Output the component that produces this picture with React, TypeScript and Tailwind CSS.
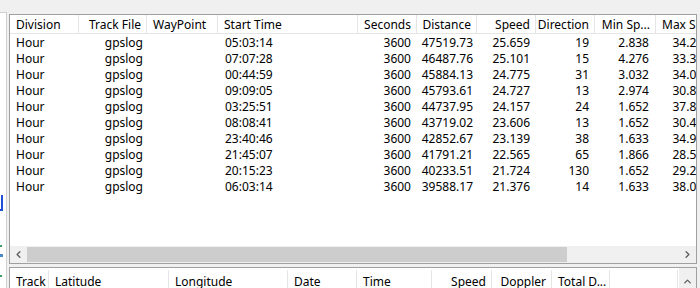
import { ChevronLeft, ChevronRight, ChevronUp } from 'lucide-react';

type Col = { label: string; w: number; align: 'left' | 'right' };

const topCols: Col[] = [
  { label: 'Division', w: 69, align: 'left' },
  { label: 'Track File', w: 68, align: 'right' },
  { label: 'WayPoint', w: 71, align: 'left' },
  { label: 'Start Time', w: 140, align: 'left' },
  { label: 'Seconds', w: 59, align: 'right' },
  { label: 'Distance', w: 60, align: 'right' },
  { label: 'Speed', w: 59, align: 'right' },
  { label: 'Direction', w: 59, align: 'right' },
  { label: 'Min Sp...', w: 61, align: 'right' },
  { label: 'Max Speed', w: 64, align: 'left' },
];

const rows = [
  ['05:03:14', '47519.73', '25.659', '19', '2.838', '34.215'],
  ['07:07:28', '46487.76', '25.101', '15', '4.276', '33.308'],
  ['00:44:59', '45884.13', '24.775', '31', '3.032', '34.017'],
  ['09:09:05', '45793.61', '24.727', '13', '2.974', '30.824'],
  ['03:25:51', '44737.95', '24.157', '24', '1.652', '37.812'],
  ['08:08:41', '43719.02', '23.606', '13', '1.652', '30.441'],
  ['23:40:46', '42852.67', '23.139', '38', '1.633', '34.903'],
  ['21:45:07', '41791.21', '22.565', '65', '1.866', '28.517'],
  ['20:15:23', '40233.51', '21.724', '130', '1.652', '29.236'],
  ['06:03:14', '39588.17', '21.376', '14', '1.633', '38.040'],
];

const bottomCols: Col[] = [
  { label: 'Track', w: 39, align: 'left' },
  { label: 'Latitude', w: 120, align: 'left' },
  { label: 'Longitude', w: 119, align: 'left' },
  { label: 'Date', w: 69, align: 'left' },
  { label: 'Time', w: 75, align: 'left' },
  { label: 'Speed', w: 60, align: 'right' },
  { label: 'Doppler', w: 60, align: 'right' },
  { label: 'Total D...', w: 58, align: 'left' },
  { label: '', w: 68, align: 'left' },
];

const HeaderCell = ({ col }: { col: Col }) => (
  <div
    className={`shrink-0 h-full border-r border-[#e5e5e5] flex items-center pt-[2px] whitespace-nowrap overflow-hidden ${
      col.align === 'right' ? 'justify-end pr-[5px]' : 'pl-[6px]'
    }`}
    style={{ width: col.w }}
  >
    {col.label}
  </div>
);

const App = () => {
  return (
    <div className="w-[700px] h-[288px] bg-[#f0f0f0] flex overflow-hidden text-[12px] text-black font-['Noto_Sans','Liberation_Sans',sans-serif]">
      {/* cut-off panel on the left */}
      <div className="w-[7px] mt-[12px] bg-white border-t border-r border-[#cfcfcf] relative shrink-0">
        <div className="absolute left-0 top-[182px] w-[3px] h-[16px] border-r-2 border-b-2 border-[#1f4fd8]" />
        <div className="absolute left-0 top-[232px] w-[2px] h-[2px] bg-[#3a9a6a]" />
        <div className="absolute left-0 top-[241px] w-[3px] h-[3px] bg-[#4a86c8]" />
        <div className="absolute left-0 top-[262px] w-[2px] h-[2px] bg-[#3a9a6a]" />
      </div>

      <div className="ml-[2px] mt-[14px] w-[688px] shrink-0 flex flex-col">
        {/* top list */}
        <div className="h-[250px] border border-[#a0a0a0] bg-white flex flex-col overflow-hidden">
          <div className="h-[19px] flex border-b border-[#e5e5e5] shrink-0">
            {topCols.map((c) => (
              <HeaderCell key={c.label} col={c} />
            ))}
          </div>
          <div className="flex-1 overflow-hidden">
            {rows.map((r, i) => (
              <div key={i} className="h-[16px] pt-[2px] flex items-center whitespace-nowrap">
                <div className="w-[69px] shrink-0 pl-[6px]">Hour</div>
                <div className="w-[68px] shrink-0 text-right pr-[4px]">gpslog</div>
                <div className="w-[71px] shrink-0" />
                <div className="w-[140px] shrink-0 pl-[7px]">{r[0]}</div>
                <div className="w-[59px] shrink-0 text-right pr-[6px]">3600</div>
                <div className="w-[60px] shrink-0 text-right pr-[4px]">{r[1]}</div>
                <div className="w-[59px] shrink-0 text-right pr-[6px]">{r[2]}</div>
                <div className="w-[59px] shrink-0 text-right pr-[6px]">{r[3]}</div>
                <div className="w-[61px] shrink-0 text-right pr-[7px]">{r[4]}</div>
                <div className="w-[60px] shrink-0 text-right pr-[6px]">{r[5]}</div>
              </div>
            ))}
          </div>
          {/* horizontal scrollbar */}
          <div className="h-[17px] bg-[#f0f0f0] flex shrink-0">
            <div className="w-[17px] flex items-center justify-center text-[#606060]">
              <ChevronLeft size={11} strokeWidth={3} />
            </div>
            <div className="flex-1 flex items-center">
              <div className="w-[540px] h-[15px] bg-[#cdcdcd]" />
            </div>
            <div className="w-[17px] flex items-center justify-center text-[#606060]">
              <ChevronRight size={11} strokeWidth={3} />
            </div>
          </div>
        </div>

        {/* bottom list */}
        <div className="mt-[3px] flex-1 border-t border-x border-[#a0a0a0] bg-white flex overflow-hidden">
          <div className="h-[24px] flex flex-1 pt-[2px] border-b border-[#e5e5e5]">
            {bottomCols.map((c, i) => (
              <HeaderCell key={i} col={c} />
            ))}
          </div>
          <div className="w-[17px] bg-[#f0f0f0] flex justify-center pt-[8px] text-[#606060] shrink-0">
            <ChevronUp size={11} strokeWidth={3} />
          </div>
        </div>
      </div>
    </div>
  );
};

export default App;
